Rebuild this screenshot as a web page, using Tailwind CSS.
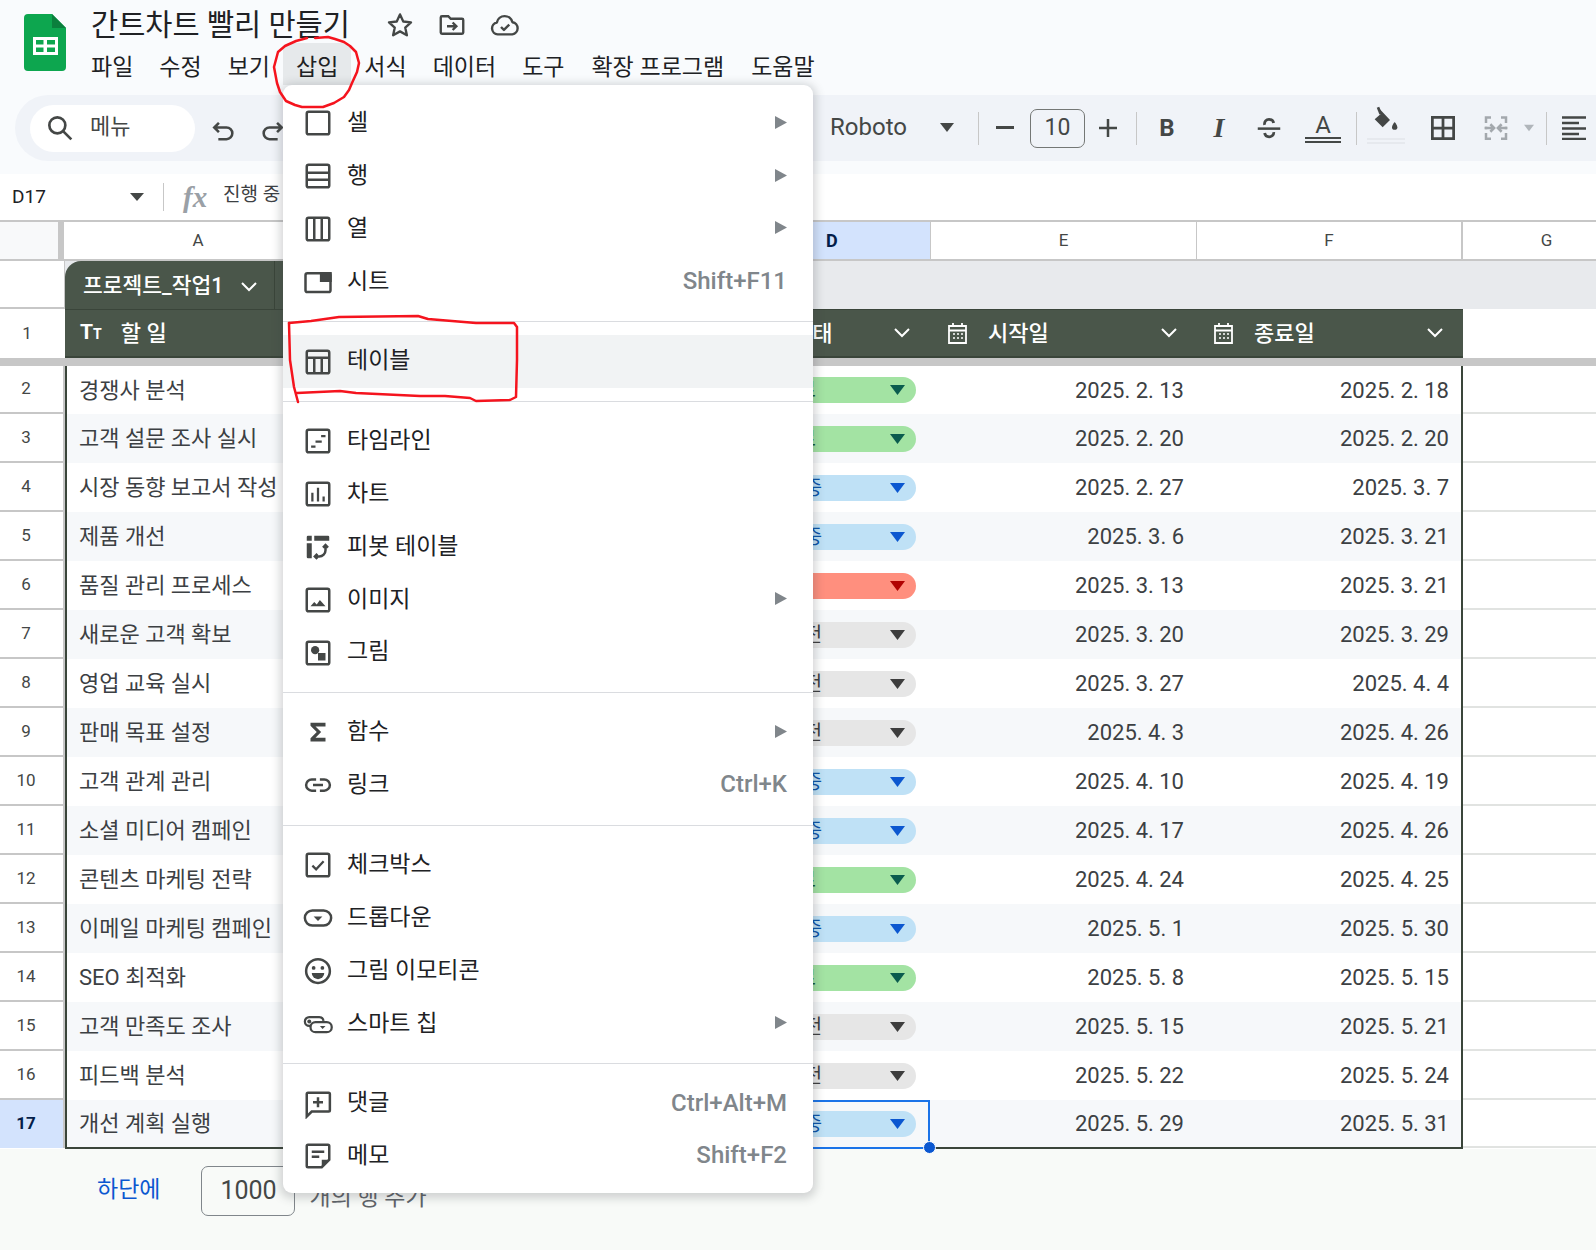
<!DOCTYPE html>
<html lang="ko">
<head>
<meta charset="utf-8">
<script src="https://cdn.jsdelivr.net/npm/@tailwindcss/browser@4"></script>
</head>
<body class="m-0">
<div class="relative w-[1596px] h-[1250px] overflow-hidden bg-[#f8faf8] text-[#3c4043] font-['Roboto','Noto_Sans_CJK_KR',sans-serif]">

  <!-- top -->
  <div class="bg-[#f9fbfd]">
    <div class="flex h-[95px] pl-[24px]">
      <svg class="mt-[14px] w-[42px] h-[57px] shrink-0" viewBox="0 0 42 57"><path d="M4 0H28L42 14V53a4 4 0 0 1-4 4H4a4 4 0 0 1-4-4V4a4 4 0 0 1 4-4z" fill="#0da64f"/><path d="M28 0L42 14H28z" fill="#0b7f3d"/><path d="M9 23H34V41H9zM12 26V30.500H19.500V26zM23 26V30.500H31V26zM12 33.500V38H19.500V33.500zM23 33.500V38H31V33.500z" fill="#fff" fill-rule="evenodd"/></svg>
      <div class="ml-[25px] flex flex-col">
        <div class="flex items-center h-[43px] pt-[7px]">
          <div class="w-[270px] text-[29.500px] text-[#202124] whitespace-nowrap">간트차트 빨리 만들기</div>
          <svg class="ml-[24px] w-[30px] h-[30px]" viewBox="0 0 24 24" fill="none" stroke="#444746" stroke-width="1.900" stroke-linejoin="round"><path d="M12 3.500l2.600 5.700 6.200.7-4.600 4.200 1.300 6.100L12 17.100l-5.500 3.100 1.300-6.100-4.600-4.200 6.200-.7z"/></svg>
          <svg class="ml-[22px] w-[30px] h-[30px]" viewBox="0 0 24 24" fill="none" stroke="#444746" stroke-width="1.900"><path d="M3 6a1 1 0 0 1 1-1h5l2 2h9a1 1 0 0 1 1 1v10a1 1 0 0 1-1 1H4a1 1 0 0 1-1-1z"/><path d="M8 13h7M12.500 10l3 3-3 3"/></svg>
          <svg class="ml-[22px] w-[32px] h-[32px]" viewBox="0 0 24 24" fill="none" stroke="#444746" stroke-width="1.800" stroke-linejoin="round"><path d="M6.500 19a4.500 4.500 0 0 1-.6-8.900 6 6 0 0 1 11.700-.2A4.600 4.600 0 0 1 17.500 19z"/><path d="M9 13.500l2.200 2.200 4-4"/></svg>
        </div>
        <div class="flex h-[42px] -ml-[13px] text-[23px] text-[#202124] pb-0">
          <div class="px-[13px] pt-[8px] flex items-center">파일</div>
          <div class="px-[13px] pt-[8px] flex items-center">수정</div>
          <div class="px-[13px] pt-[8px] flex items-center">보기</div>
          <div class="px-[13px] pt-[8px] flex items-center bg-[#e6e9eb] rounded-t-[6px]">삽입</div>
          <div class="px-[13px] pt-[8px] flex items-center">서식</div>
          <div class="px-[13px] pt-[8px] flex items-center">데이터</div>
          <div class="px-[13px] pt-[8px] flex items-center">도구</div>
          <div class="px-[14px] pt-[8px] flex items-center whitespace-nowrap">확장 프로그램</div>
          <div class="px-[13px] pt-[8px] flex items-center">도움말</div>
        </div>
      </div>
    </div>

    <!-- toolbar -->
    <div class="ml-[15px] h-[66px] rounded-l-[33px] bg-[#f0f3f8] flex items-center text-[#444746]">
      <div class="ml-[15px] w-[165px] h-[47px] rounded-full bg-white flex items-center pl-[14px] shrink-0">
        <svg class="w-[32px] h-[32px] shrink-0" viewBox="0 0 24 24" fill="none" stroke="#444746" stroke-width="2"><circle cx="10" cy="10" r="6"/><path d="M14.500 14.500L20.500 20.500"/></svg>
        <span class="ml-[14px] mb-[3px] text-[22px] text-[#444746]">메뉴</span>
      </div>
      <div class="ml-[3px] w-[50px] flex justify-center shrink-0"><svg class="w-[28px] h-[28px] mt-[6px]" viewBox="0 0 24 24" fill="none" stroke="#444746" stroke-width="2.200"><path d="M8.500 5L4.500 9l4 4M4.500 9H15a5 5 0 0 1 0 10H8"/></svg></div>
      <div class="w-[50px] flex justify-center shrink-0"><svg class="w-[28px] h-[28px] mt-[6px]" viewBox="0 0 24 24" fill="none" stroke="#444746" stroke-width="2.200"><path d="M15.500 5l4 4-4 4M19.500 9H9a5 5 0 0 0 0 10h7"/></svg></div>
      <div class="ml-[532px] w-[130px] flex items-center justify-between pr-[6px] pb-[2px] shrink-0 text-[24px]"><span>Roboto</span><svg class="w-[14px] h-[9px]" viewBox="0 0 14 9"><path d="M0 0H14L7 9z" fill="#444746"/></svg></div>
      <div class="ml-[18px] w-px h-[33px] bg-[#c7c7c7] shrink-0"></div>
      <div class="w-[51px] flex justify-center shrink-0"><svg class="w-[18px] h-[4px]" viewBox="0 0 18 4"><path d="M0 0H18V3H0z" fill="#444746"/></svg></div>
      <div class="w-[55px] h-[39px] border border-[#747775] rounded-[7px] flex items-center justify-center text-[23px] shrink-0">10</div>
      <div class="ml-[13px] w-[20px] flex justify-center shrink-0"><svg class="w-[18px] h-[18px]" viewBox="0 0 18 18"><path d="M7.750 0H10.250V7.750H18V10.250H10.250V18H7.750V10.250H0V7.750H7.750z" fill="#444746"/></svg></div>
      <div class="ml-[18px] w-px h-[33px] bg-[#c7c7c7] shrink-0"></div>
      <div class="ml-[10px] w-[40px] text-center text-[24px] font-bold shrink-0">B</div>
      <div class="ml-[12px] w-[40px] text-center text-[28px] leading-[30px] font-bold italic font-['Liberation_Serif',serif] shrink-0">I</div>
      <div class="ml-[10px] w-[40px] flex justify-center shrink-0"><svg class="w-[30px] h-[30px]" viewBox="0 0 24 24" fill="none" stroke="#444746" stroke-width="2"><path d="M3 12.500H21"/><path d="M8.500 9.500C8 6.800 9.800 5 12 5s3.500 1.300 3.700 3M8.500 16c.3 1.900 1.800 3 3.600 3 2.200 0 3.800-1.400 3.700-3.700" stroke-width="2.200"/></svg></div>
      <div class="ml-[14px] w-[40px] flex flex-col items-center shrink-0">
        <span class="text-[24px] leading-[25px] -mb-[1px]">A</span>
        <div class="w-[36px] h-[6px] border-y-2 border-[#444746]"></div>
      </div>
      <div class="ml-[13px] w-px h-[33px] bg-[#c7c7c7] shrink-0"></div>
      <div class="ml-[9px] w-[40px] flex flex-col items-center shrink-0">
        <svg class="w-[32px] h-[32px] -mt-[6px]" viewBox="0 0 24 24"><path d="M6 1L15 10.500 9.500 16 3.500 10 8 6z" fill="#444746"/><path d="M6 1L8 6" stroke="#444746" stroke-width="2"/><path d="M18.500 12s-2 2.400-2 3.900a2 2 0 0 0 4 0c0-1.500-2-3.900-2-3.900z" fill="#444746"/></svg>
        <div class="w-[38px] h-[6px] border-y-2 border-[#e6e9ee]"></div>
      </div>
      <div class="ml-[17px] w-[40px] flex justify-center shrink-0"><svg class="w-[30px] h-[30px]" viewBox="0 0 24 24" fill="none" stroke="#444746" stroke-width="2.200"><path d="M3.500 3.500H20.500V20.500H3.500zM12 3.500V20.500M3.500 12H20.500"/></svg></div>
      <div class="ml-[13px] w-[40px] flex justify-center shrink-0"><svg class="w-[30px] h-[30px]" viewBox="0 0 24 24" fill="none" stroke="#a3a8ad" stroke-width="2"><path d="M8 3.500H4V8M4 16V20.500H8M16 3.500H20V8M20 16V20.500H16M4 11V13M20 11V13"/><path d="M3 12H10M7.500 9l3 3-3 3M21 12H14M16.500 9l-3 3 3 3"/></svg></div>
      <div class="ml-[8px] w-[10px] flex justify-center shrink-0"><svg class="w-[12px] h-[8px]" viewBox="0 0 12 8"><path d="M0 0H12L6 8z" fill="#b0b5ba"/></svg></div>
      <div class="ml-[12px] w-px h-[33px] bg-[#c7c7c7] shrink-0"></div>
      <div class="ml-[7px] w-[40px] flex justify-center shrink-0"><svg class="w-[24px] h-[24px]" viewBox="0 0 24 24" fill="none" stroke="#444746" stroke-width="2.500"><path d="M0 1.500H24M0 7H17M0 12.500H24M0 18H17M0 23H24"/></svg></div>
    </div>

    <!-- formula bar -->
    <div class="mt-[13px] h-[46px] bg-white flex items-center">
      <div class="w-[130px] pl-[12px] text-[19px] text-[#202124] shrink-0">D17</div>
      <svg class="w-[14px] h-[8px] shrink-0" viewBox="0 0 14 8"><path d="M0 0H14L7 8z" fill="#444746"/></svg>
      <div class="ml-[19px] w-px h-[28px] bg-[#c7c7c7] shrink-0"></div>
      <div class="ml-[19px] w-[26px] text-[29px] leading-none italic font-bold font-['Liberation_Serif',serif] text-[#9aa0a6] shrink-0">fx</div>
      <div class="ml-[14px] mb-[3px] text-[19px] text-[#3c4043] whitespace-nowrap">진행 중</div>
    </div>
  </div>

  <!-- sheet -->
  <div class="bg-white">
    <div class="flex h-[39px] border-t-2 border-[#c7c7c7] text-[#444746] text-[17px]">
      <div class="w-[58px] bg-[#f8f9fa] shrink-0"></div>
      <div class="w-[6px] bg-[#c7c7c7] shrink-0"></div>
      <div class="w-[680px] flex justify-center pr-[410px] items-center border-r-2 border-[#e1e3e1] shrink-0">A</div>
      <div class="w-[186px] bg-[#d3e3fd] text-[#041e49] font-bold text-[18px] flex items-center pl-[82px] shrink-0">D</div>
      <div class="w-[267px] flex items-center justify-center border-x border-[#c7c7c7] shrink-0">E</div>
      <div class="w-[266px] flex items-center justify-center border-r-2 border-[#c7c7c7] shrink-0">F</div>
      <div class="flex-1 flex items-center justify-center pl-[34px]">G</div>
    </div>
    <div class="h-[2px] bg-[#c7c7c7]"></div>

    <!-- table name row -->
    <div class="flex h-[48px]">
      <div class="w-[65px] shrink-0 bg-white border-b-2 border-r border-[#c7c7c7]"></div>
      <div class="flex-1 bg-[#e8eaed] flex">
        <div class="w-[680px] h-full rounded-tl-[16px] bg-[#4a564a] flex items-center text-white">
          <div class="w-[210px] h-full border-r border-[#3a453a] flex items-center pl-[18px] pt-[3px] shrink-0">
            <span class="font-medium text-[21.500px] whitespace-nowrap">프로젝트_작업1</span>
            <svg class="ml-[17px] w-[16px] h-[10px] shrink-0" viewBox="0 0 16 10" fill="none" stroke="#fff" stroke-width="2"><path d="M1 1l7 7 7-7"/></svg>
          </div>
        </div>
      </div>
    </div>

    <!-- header row -->
    <div class="flex h-[49px]">
      <div class="w-[65px] shrink-0 flex items-center justify-center text-[17px] text-[#444746] pr-[11px]">1</div>
      <div class="w-[1398px] shrink-0 bg-[#4a564a] border-t border-b-2 border-[#3a453a] text-white text-[22px] flex items-center">
        <div class="w-[680px] shrink-0 flex items-center pl-[15px]">
          <span class="font-bold text-[21px]">T</span><span class="font-bold text-[14px] mt-[3px]">T</span>
          <span class="ml-[19px] font-medium">할 일</span>
        </div>
        <div class="w-[185px] shrink-0 flex items-center justify-between pr-[20px] pl-[47px]">
          <span class="font-medium">상태</span>
          <svg class="w-[16px] h-[10px]" viewBox="0 0 16 10" fill="none" stroke="#fff" stroke-width="2"><path d="M1 1l7 7 7-7"/></svg>
        </div>
        <div class="w-[266px] shrink-0 flex items-center pl-[17px] pr-[19px]">
          <svg class="w-[21px] h-[24px] shrink-0" viewBox="0 0 21 24" fill="none" stroke="#fff" stroke-width="1.800"><path d="M2 5H19V22H2zM2 9.500H19M6 2V6M15 2V6"/><path d="M6 13h2M10 13h2M14 13h2M6 17h2M10 17h2M14 17h2" stroke-width="1.500"/></svg>
          <span class="ml-[20px] font-medium flex-1">시작일</span>
          <svg class="w-[16px] h-[10px]" viewBox="0 0 16 10" fill="none" stroke="#fff" stroke-width="2"><path d="M1 1l7 7 7-7"/></svg>
        </div>
        <div class="w-[265px] shrink-0 flex items-center pl-[17px] pr-[18px]">
          <svg class="w-[21px] h-[24px] shrink-0" viewBox="0 0 21 24" fill="none" stroke="#fff" stroke-width="1.800"><path d="M2 5H19V22H2zM2 9.500H19M6 2V6M15 2V6"/><path d="M6 13h2M10 13h2M14 13h2M6 17h2M10 17h2M14 17h2" stroke-width="1.500"/></svg>
          <span class="ml-[20px] font-medium flex-1">종료일</span>
          <svg class="w-[16px] h-[10px]" viewBox="0 0 16 10" fill="none" stroke="#fff" stroke-width="2"><path d="M1 1l7 7 7-7"/></svg>
        </div>
      </div>
      <div class="flex-1"></div>
    </div>
    <div class="h-[8px] bg-[#c7c7c7]"></div>

    <!-- data rows -->
    <div class="flex h-[48px]">
      <div class="w-[65px] shrink-0 border-b-2 border-r-2 border-[#c7c7c7] flex items-center justify-center text-[17px] text-[#444746] pr-[11px]">2</div>
      <div class="w-[1398px] shrink-0 border-x-2 border-[#3a453a] flex items-center text-[22px] bg-white">
        <div class="w-[678px] shrink-0 pl-[12px] whitespace-nowrap">경쟁사 분석</div>
        <div class="w-[185px] shrink-0 pl-[5px]"><div class="w-[166px] h-[26px] rounded-full bg-[#a3e3a3] flex items-center pr-[11px] text-[20px] text-[#0a5132]"><span class="ml-[29px] flex-1">완료</span><svg class="w-[15px] h-[10px]" viewBox="0 0 15 10"><path d="M0 0H15L7.500 10z" fill="#0a5c4e"/></svg></div></div>
        <div class="w-[266px] shrink-0 text-right pr-[12px]">2025. 2. 13</div>
        <div class="w-[265px] shrink-0 text-right pr-[12px]">2025. 2. 18</div>
      </div>
      <div class="flex-1 border-b-2 border-[#e1e3e1]"></div>
    </div>
    <div class="flex h-[49px]">
      <div class="w-[65px] shrink-0 border-b-2 border-r-2 border-[#c7c7c7] flex items-center justify-center text-[17px] text-[#444746] pr-[11px]">3</div>
      <div class="w-[1398px] shrink-0 border-x-2 border-[#3a453a] flex items-center text-[22px] bg-[#f6f8fa] self-stretch">
        <div class="w-[678px] shrink-0 pl-[12px] whitespace-nowrap">고객 설문 조사 실시</div>
        <div class="w-[185px] shrink-0 pl-[5px]"><div class="w-[166px] h-[26px] rounded-full bg-[#a3e3a3] flex items-center pr-[11px] text-[20px] text-[#0a5132]"><span class="ml-[29px] flex-1">완료</span><svg class="w-[15px] h-[10px]" viewBox="0 0 15 10"><path d="M0 0H15L7.500 10z" fill="#0a5c4e"/></svg></div></div>
        <div class="w-[266px] shrink-0 text-right pr-[12px]">2025. 2. 20</div>
        <div class="w-[265px] shrink-0 text-right pr-[12px]">2025. 2. 20</div>
      </div>
      <div class="flex-1 border-b-2 border-[#e1e3e1]"></div>
    </div>
    <div class="flex h-[49px]">
      <div class="w-[65px] shrink-0 border-b-2 border-r-2 border-[#c7c7c7] flex items-center justify-center text-[17px] text-[#444746] pr-[11px]">4</div>
      <div class="w-[1398px] shrink-0 border-x-2 border-[#3a453a] flex items-center text-[22px] bg-white">
        <div class="w-[678px] shrink-0 pl-[12px] whitespace-nowrap">시장 동향 보고서 작성</div>
        <div class="w-[185px] shrink-0 pl-[5px]"><div class="w-[166px] h-[26px] rounded-full bg-[#bfe1f6] flex items-center pr-[11px] text-[20px] text-[#0a53a8]"><span class="ml-[12px] flex-1">진행 중</span><svg class="w-[15px] h-[10px]" viewBox="0 0 15 10"><path d="M0 0H15L7.500 10z" fill="#0b57d0"/></svg></div></div>
        <div class="w-[266px] shrink-0 text-right pr-[12px]">2025. 2. 27</div>
        <div class="w-[265px] shrink-0 text-right pr-[12px]">2025. 3. 7</div>
      </div>
      <div class="flex-1 border-b-2 border-[#e1e3e1]"></div>
    </div>
    <div class="flex h-[49px]">
      <div class="w-[65px] shrink-0 border-b-2 border-r-2 border-[#c7c7c7] flex items-center justify-center text-[17px] text-[#444746] pr-[11px]">5</div>
      <div class="w-[1398px] shrink-0 border-x-2 border-[#3a453a] flex items-center text-[22px] bg-[#f6f8fa]">
        <div class="w-[678px] shrink-0 pl-[12px] whitespace-nowrap">제품 개선</div>
        <div class="w-[185px] shrink-0 pl-[5px]"><div class="w-[166px] h-[26px] rounded-full bg-[#bfe1f6] flex items-center pr-[11px] text-[20px] text-[#0a53a8]"><span class="ml-[12px] flex-1">진행 중</span><svg class="w-[15px] h-[10px]" viewBox="0 0 15 10"><path d="M0 0H15L7.500 10z" fill="#0b57d0"/></svg></div></div>
        <div class="w-[266px] shrink-0 text-right pr-[12px]">2025. 3. 6</div>
        <div class="w-[265px] shrink-0 text-right pr-[12px]">2025. 3. 21</div>
      </div>
      <div class="flex-1 border-b-2 border-[#e1e3e1]"></div>
    </div>
    <div class="flex h-[49px]">
      <div class="w-[65px] shrink-0 border-b-2 border-r-2 border-[#c7c7c7] flex items-center justify-center text-[17px] text-[#444746] pr-[11px]">6</div>
      <div class="w-[1398px] shrink-0 border-x-2 border-[#3a453a] flex items-center text-[22px] bg-white">
        <div class="w-[678px] shrink-0 pl-[12px] whitespace-nowrap">품질 관리 프로세스</div>
        <div class="w-[185px] shrink-0 pl-[5px]"><div class="w-[166px] h-[26px] rounded-full bg-[#ff8f7e] flex items-center pr-[11px] text-[20px] text-[#8a1c0a]"><span class="ml-[4px] flex-1">차단됨</span><svg class="w-[15px] h-[10px]" viewBox="0 0 15 10"><path d="M0 0H15L7.500 10z" fill="#b10202"/></svg></div></div>
        <div class="w-[266px] shrink-0 text-right pr-[12px]">2025. 3. 13</div>
        <div class="w-[265px] shrink-0 text-right pr-[12px]">2025. 3. 21</div>
      </div>
      <div class="flex-1 border-b-2 border-[#e1e3e1]"></div>
    </div>
    <div class="flex h-[49px]">
      <div class="w-[65px] shrink-0 border-b-2 border-r-2 border-[#c7c7c7] flex items-center justify-center text-[17px] text-[#444746] pr-[11px]">7</div>
      <div class="w-[1398px] shrink-0 border-x-2 border-[#3a453a] flex items-center text-[22px] bg-[#f6f8fa]">
        <div class="w-[678px] shrink-0 pl-[12px] whitespace-nowrap">새로운 고객 확보</div>
        <div class="w-[185px] shrink-0 pl-[5px]"><div class="w-[166px] h-[26px] rounded-full bg-[#e6e6e6] flex items-center pr-[11px] text-[20px] text-[#3d3d3d]"><span class="ml-[12px] flex-1">시작 전</span><svg class="w-[15px] h-[10px]" viewBox="0 0 15 10"><path d="M0 0H15L7.500 10z" fill="#3d3d3d"/></svg></div></div>
        <div class="w-[266px] shrink-0 text-right pr-[12px]">2025. 3. 20</div>
        <div class="w-[265px] shrink-0 text-right pr-[12px]">2025. 3. 29</div>
      </div>
      <div class="flex-1 border-b-2 border-[#e1e3e1]"></div>
    </div>
    <div class="flex h-[49px]">
      <div class="w-[65px] shrink-0 border-b-2 border-r-2 border-[#c7c7c7] flex items-center justify-center text-[17px] text-[#444746] pr-[11px]">8</div>
      <div class="w-[1398px] shrink-0 border-x-2 border-[#3a453a] flex items-center text-[22px] bg-white">
        <div class="w-[678px] shrink-0 pl-[12px] whitespace-nowrap">영업 교육 실시</div>
        <div class="w-[185px] shrink-0 pl-[5px]"><div class="w-[166px] h-[26px] rounded-full bg-[#e6e6e6] flex items-center pr-[11px] text-[20px] text-[#3d3d3d]"><span class="ml-[12px] flex-1">시작 전</span><svg class="w-[15px] h-[10px]" viewBox="0 0 15 10"><path d="M0 0H15L7.500 10z" fill="#3d3d3d"/></svg></div></div>
        <div class="w-[266px] shrink-0 text-right pr-[12px]">2025. 3. 27</div>
        <div class="w-[265px] shrink-0 text-right pr-[12px]">2025. 4. 4</div>
      </div>
      <div class="flex-1 border-b-2 border-[#e1e3e1]"></div>
    </div>
    <div class="flex h-[49px]">
      <div class="w-[65px] shrink-0 border-b-2 border-r-2 border-[#c7c7c7] flex items-center justify-center text-[17px] text-[#444746] pr-[11px]">9</div>
      <div class="w-[1398px] shrink-0 border-x-2 border-[#3a453a] flex items-center text-[22px] bg-[#f6f8fa]">
        <div class="w-[678px] shrink-0 pl-[12px] whitespace-nowrap">판매 목표 설정</div>
        <div class="w-[185px] shrink-0 pl-[5px]"><div class="w-[166px] h-[26px] rounded-full bg-[#e6e6e6] flex items-center pr-[11px] text-[20px] text-[#3d3d3d]"><span class="ml-[12px] flex-1">시작 전</span><svg class="w-[15px] h-[10px]" viewBox="0 0 15 10"><path d="M0 0H15L7.500 10z" fill="#3d3d3d"/></svg></div></div>
        <div class="w-[266px] shrink-0 text-right pr-[12px]">2025. 4. 3</div>
        <div class="w-[265px] shrink-0 text-right pr-[12px]">2025. 4. 26</div>
      </div>
      <div class="flex-1 border-b-2 border-[#e1e3e1]"></div>
    </div>
    <div class="flex h-[49px]">
      <div class="w-[65px] shrink-0 border-b-2 border-r-2 border-[#c7c7c7] flex items-center justify-center text-[17px] text-[#444746] pr-[11px]">10</div>
      <div class="w-[1398px] shrink-0 border-x-2 border-[#3a453a] flex items-center text-[22px] bg-white">
        <div class="w-[678px] shrink-0 pl-[12px] whitespace-nowrap">고객 관계 관리</div>
        <div class="w-[185px] shrink-0 pl-[5px]"><div class="w-[166px] h-[26px] rounded-full bg-[#bfe1f6] flex items-center pr-[11px] text-[20px] text-[#0a53a8]"><span class="ml-[12px] flex-1">진행 중</span><svg class="w-[15px] h-[10px]" viewBox="0 0 15 10"><path d="M0 0H15L7.500 10z" fill="#0b57d0"/></svg></div></div>
        <div class="w-[266px] shrink-0 text-right pr-[12px]">2025. 4. 10</div>
        <div class="w-[265px] shrink-0 text-right pr-[12px]">2025. 4. 19</div>
      </div>
      <div class="flex-1 border-b-2 border-[#e1e3e1]"></div>
    </div>
    <div class="flex h-[49px]">
      <div class="w-[65px] shrink-0 border-b-2 border-r-2 border-[#c7c7c7] flex items-center justify-center text-[17px] text-[#444746] pr-[11px]">11</div>
      <div class="w-[1398px] shrink-0 border-x-2 border-[#3a453a] flex items-center text-[22px] bg-[#f6f8fa]">
        <div class="w-[678px] shrink-0 pl-[12px] whitespace-nowrap">소셜 미디어 캠페인</div>
        <div class="w-[185px] shrink-0 pl-[5px]"><div class="w-[166px] h-[26px] rounded-full bg-[#bfe1f6] flex items-center pr-[11px] text-[20px] text-[#0a53a8]"><span class="ml-[12px] flex-1">진행 중</span><svg class="w-[15px] h-[10px]" viewBox="0 0 15 10"><path d="M0 0H15L7.500 10z" fill="#0b57d0"/></svg></div></div>
        <div class="w-[266px] shrink-0 text-right pr-[12px]">2025. 4. 17</div>
        <div class="w-[265px] shrink-0 text-right pr-[12px]">2025. 4. 26</div>
      </div>
      <div class="flex-1 border-b-2 border-[#e1e3e1]"></div>
    </div>
    <div class="flex h-[49px]">
      <div class="w-[65px] shrink-0 border-b-2 border-r-2 border-[#c7c7c7] flex items-center justify-center text-[17px] text-[#444746] pr-[11px]">12</div>
      <div class="w-[1398px] shrink-0 border-x-2 border-[#3a453a] flex items-center text-[22px] bg-white">
        <div class="w-[678px] shrink-0 pl-[12px] whitespace-nowrap">콘텐츠 마케팅 전략</div>
        <div class="w-[185px] shrink-0 pl-[5px]"><div class="w-[166px] h-[26px] rounded-full bg-[#a3e3a3] flex items-center pr-[11px] text-[20px] text-[#0a5132]"><span class="ml-[29px] flex-1">완료</span><svg class="w-[15px] h-[10px]" viewBox="0 0 15 10"><path d="M0 0H15L7.500 10z" fill="#0a5c4e"/></svg></div></div>
        <div class="w-[266px] shrink-0 text-right pr-[12px]">2025. 4. 24</div>
        <div class="w-[265px] shrink-0 text-right pr-[12px]">2025. 4. 25</div>
      </div>
      <div class="flex-1 border-b-2 border-[#e1e3e1]"></div>
    </div>
    <div class="flex h-[49px]">
      <div class="w-[65px] shrink-0 border-b-2 border-r-2 border-[#c7c7c7] flex items-center justify-center text-[17px] text-[#444746] pr-[11px]">13</div>
      <div class="w-[1398px] shrink-0 border-x-2 border-[#3a453a] flex items-center text-[22px] bg-[#f6f8fa]">
        <div class="w-[678px] shrink-0 pl-[12px] whitespace-nowrap">이메일 마케팅 캠페인</div>
        <div class="w-[185px] shrink-0 pl-[5px]"><div class="w-[166px] h-[26px] rounded-full bg-[#bfe1f6] flex items-center pr-[11px] text-[20px] text-[#0a53a8]"><span class="ml-[12px] flex-1">진행 중</span><svg class="w-[15px] h-[10px]" viewBox="0 0 15 10"><path d="M0 0H15L7.500 10z" fill="#0b57d0"/></svg></div></div>
        <div class="w-[266px] shrink-0 text-right pr-[12px]">2025. 5. 1</div>
        <div class="w-[265px] shrink-0 text-right pr-[12px]">2025. 5. 30</div>
      </div>
      <div class="flex-1 border-b-2 border-[#e1e3e1]"></div>
    </div>
    <div class="flex h-[49px]">
      <div class="w-[65px] shrink-0 border-b-2 border-r-2 border-[#c7c7c7] flex items-center justify-center text-[17px] text-[#444746] pr-[11px]">14</div>
      <div class="w-[1398px] shrink-0 border-x-2 border-[#3a453a] flex items-center text-[22px] bg-white">
        <div class="w-[678px] shrink-0 pl-[12px] whitespace-nowrap">SEO 최적화</div>
        <div class="w-[185px] shrink-0 pl-[5px]"><div class="w-[166px] h-[26px] rounded-full bg-[#a3e3a3] flex items-center pr-[11px] text-[20px] text-[#0a5132]"><span class="ml-[29px] flex-1">완료</span><svg class="w-[15px] h-[10px]" viewBox="0 0 15 10"><path d="M0 0H15L7.500 10z" fill="#0a5c4e"/></svg></div></div>
        <div class="w-[266px] shrink-0 text-right pr-[12px]">2025. 5. 8</div>
        <div class="w-[265px] shrink-0 text-right pr-[12px]">2025. 5. 15</div>
      </div>
      <div class="flex-1 border-b-2 border-[#e1e3e1]"></div>
    </div>
    <div class="flex h-[49px]">
      <div class="w-[65px] shrink-0 border-b-2 border-r-2 border-[#c7c7c7] flex items-center justify-center text-[17px] text-[#444746] pr-[11px]">15</div>
      <div class="w-[1398px] shrink-0 border-x-2 border-[#3a453a] flex items-center text-[22px] bg-[#f6f8fa]">
        <div class="w-[678px] shrink-0 pl-[12px] whitespace-nowrap">고객 만족도 조사</div>
        <div class="w-[185px] shrink-0 pl-[5px]"><div class="w-[166px] h-[26px] rounded-full bg-[#e6e6e6] flex items-center pr-[11px] text-[20px] text-[#3d3d3d]"><span class="ml-[12px] flex-1">시작 전</span><svg class="w-[15px] h-[10px]" viewBox="0 0 15 10"><path d="M0 0H15L7.500 10z" fill="#3d3d3d"/></svg></div></div>
        <div class="w-[266px] shrink-0 text-right pr-[12px]">2025. 5. 15</div>
        <div class="w-[265px] shrink-0 text-right pr-[12px]">2025. 5. 21</div>
      </div>
      <div class="flex-1 border-b-2 border-[#e1e3e1]"></div>
    </div>
    <div class="flex h-[49px]">
      <div class="w-[65px] shrink-0 border-b-2 border-r-2 border-[#c7c7c7] flex items-center justify-center text-[17px] text-[#444746] pr-[11px]">16</div>
      <div class="w-[1398px] shrink-0 border-x-2 border-[#3a453a] flex items-center text-[22px] bg-white">
        <div class="w-[678px] shrink-0 pl-[12px] whitespace-nowrap">피드백 분석</div>
        <div class="w-[185px] shrink-0 pl-[5px]"><div class="w-[166px] h-[26px] rounded-full bg-[#e6e6e6] flex items-center pr-[11px] text-[20px] text-[#3d3d3d]"><span class="ml-[12px] flex-1">시작 전</span><svg class="w-[15px] h-[10px]" viewBox="0 0 15 10"><path d="M0 0H15L7.500 10z" fill="#3d3d3d"/></svg></div></div>
        <div class="w-[266px] shrink-0 text-right pr-[12px]">2025. 5. 22</div>
        <div class="w-[265px] shrink-0 text-right pr-[12px]">2025. 5. 24</div>
      </div>
      <div class="flex-1 border-b-2 border-[#e1e3e1]"></div>
    </div>
    <div class="flex h-[49px]">
      <div class="w-[65px] h-[48px] shrink-0 border-r-2 border-[#c7c7c7] bg-[#d3e3fd] flex items-center justify-center text-[17px] font-bold text-[#041e49] pr-[11px]">17</div>
      <div class="w-[1398px] shrink-0 border-x-2 border-b-2 border-[#3a453a] flex items-center text-[22px] bg-[#f6f8fa]">
        <div class="w-[678px] shrink-0 pl-[12px] whitespace-nowrap">개선 계획 실행</div>
        <div class="relative w-[185px] self-stretch shrink-0 pl-[5px] flex items-center">
          <div class="absolute left-0 right-0 top-0 -bottom-[2px] border-2 border-[#1a73e8] border-l-0"></div>
          <div class="w-[166px] h-[26px] rounded-full bg-[#bfe1f6] flex items-center pr-[11px] text-[20px] text-[#0a53a8]"><span class="ml-[12px] flex-1">진행 중</span><svg class="w-[15px] h-[10px]" viewBox="0 0 15 10"><path d="M0 0H15L7.500 10z" fill="#0b57d0"/></svg></div>
          <div class="absolute -right-[6px] -bottom-[7px] w-[13px] h-[13px] rounded-full bg-[#0b57d0] border-[1.500px] border-white"></div>
        </div>
        <div class="w-[266px] shrink-0 text-right pr-[12px]">2025. 5. 29</div>
        <div class="w-[265px] shrink-0 text-right pr-[12px]">2025. 5. 31</div>
      </div>
      <div class="flex-1 h-[48px] border-b-2 border-[#e1e3e1]"></div>
    </div>
  </div>

  <!-- add rows -->
  <div class="flex items-center pl-[97px] pt-[17px]">
    <span class="text-[23px] text-[#0b57d0] -mt-[2px]">하단에</span>
    <div class="ml-[41px] w-[94px] h-[50px] rounded-[7px] border border-[#80868b] flex items-center justify-center text-[25px] text-[#444746] shrink-0">1000</div>
    <span class="ml-[14px] text-[23px] text-[#5f6368] mt-[14px] whitespace-nowrap">개의 행 추가</span>
  </div>

  <!-- insert menu -->
  <div class="absolute left-[283px] top-[85px] w-[530px] h-[1108px] bg-white rounded-[9px] shadow-[0_2px_10px_3px_rgba(60,64,67,0.22)] pt-[12px] text-[23px] text-[#202124]">
    <div class="flex items-center h-[52.800px] pl-[20px] pr-[26px]">
      <svg class="w-[30px] h-[30px] shrink-0" viewBox="0 0 24 24" fill="none" stroke="#444746" stroke-width="2"><rect x="3" y="3" width="18" height="18" rx="1.500"/></svg>
      <span class="ml-[14px] flex-1">셀</span>
      <svg class="w-[12px] h-[13px] -mt-[2px]" viewBox="0 0 12 13"><path d="M0 0L12 6.500 0 13z" fill="#80868b"/></svg>
    </div>
    <div class="flex items-center h-[52.800px] pl-[20px] pr-[26px]">
      <svg class="w-[30px] h-[30px] shrink-0" viewBox="0 0 24 24" fill="none" stroke="#444746" stroke-width="2"><rect x="3" y="3" width="18" height="18" rx="1.500"/><path d="M3 9.300H21M3 15H21"/></svg>
      <span class="ml-[14px] flex-1">행</span>
      <svg class="w-[12px] h-[13px] -mt-[2px]" viewBox="0 0 12 13"><path d="M0 0L12 6.500 0 13z" fill="#80868b"/></svg>
    </div>
    <div class="flex items-center h-[52.800px] pl-[20px] pr-[26px]">
      <svg class="w-[30px] h-[30px] shrink-0" viewBox="0 0 24 24" fill="none" stroke="#444746" stroke-width="2"><rect x="3" y="3" width="18" height="18" rx="1.500"/><path d="M9 3V21M15 3V21"/></svg>
      <span class="ml-[14px] flex-1">열</span>
      <svg class="w-[12px] h-[13px] -mt-[2px]" viewBox="0 0 12 13"><path d="M0 0L12 6.500 0 13z" fill="#80868b"/></svg>
    </div>
    <div class="flex items-center h-[52.800px] pl-[20px] pr-[26px]">
      <svg class="w-[30px] h-[30px] shrink-0" viewBox="0 0 24 24" fill="none" stroke="#444746" stroke-width="2"><rect x="2" y="5" width="20" height="15" rx="1.500"/><path d="M14.500 5H22V11H14.500z" fill="#444746"/></svg>
      <span class="ml-[14px] flex-1">시트</span>
      <span class="text-[24px] font-medium text-[#80868b] -mt-[2px]">Shift+F11</span>
    </div>
    <div class="mt-[13px] mb-[13px] h-px bg-[#dadce0]"></div>
    <div class="flex items-center h-[52.800px] pl-[20px] pr-[26px] bg-[#f1f3f4]">
      <svg class="w-[30px] h-[30px] shrink-0" viewBox="0 0 24 24" fill="none" stroke="#444746" stroke-width="2"><rect x="3" y="3" width="18" height="18" rx="1.500"/><path d="M3 8.500H21M9 8.500V21M15 8.500V21"/></svg>
      <span class="ml-[14px] flex-1">테이블</span>
    </div>
    <div class="mt-[13px] mb-[13px] h-px bg-[#dadce0]"></div>
    <div class="flex items-center h-[52.800px] pl-[20px] pr-[26px]">
      <svg class="w-[30px] h-[30px] shrink-0" viewBox="0 0 24 24" fill="none" stroke="#444746" stroke-width="2"><rect x="3" y="3" width="18" height="18" rx="1.500"/><path d="M6.500 16.500H10M10 12.500H15M14.500 8H18" stroke-width="1.800"/></svg>
      <span class="ml-[14px] flex-1">타임라인</span>
    </div>
    <div class="flex items-center h-[52.800px] pl-[20px] pr-[26px]">
      <svg class="w-[30px] h-[30px] shrink-0" viewBox="0 0 24 24" fill="none" stroke="#444746" stroke-width="2"><rect x="3" y="3" width="18" height="18" rx="1.500"/><path d="M7.500 11V18M12 7V18M16.500 14V18" stroke-width="1.800"/></svg>
      <span class="ml-[14px] flex-1">차트</span>
    </div>
    <div class="flex items-center h-[52.800px] pl-[20px] pr-[26px]">
      <svg class="w-[30px] h-[30px] shrink-0" viewBox="0 0 24 24"><path d="M3 4a1 1 0 0 1 1-1h3v4H3zM9 3h11a1 1 0 0 1 1 1v3H9zM3 9h4v12H4a1 1 0 0 1-1-1z" fill="#444746"/><path d="M10 19.500h3a5 5 0 0 0 5-5V11M11.500 17.500l-2 2 2 2M16 12.500l2-2 2 2" fill="none" stroke="#444746" stroke-width="2"/></svg>
      <span class="ml-[14px] flex-1">피봇 테이블</span>
    </div>
    <div class="flex items-center h-[52.800px] pl-[20px] pr-[26px]">
      <svg class="w-[30px] h-[30px] shrink-0" viewBox="0 0 24 24" fill="none" stroke="#444746" stroke-width="2"><rect x="3" y="3" width="18" height="18" rx="1.500"/><path d="M6 17l3-3.500 2 2 2.500-3.500L18 17z" fill="#444746" stroke="none"/></svg>
      <span class="ml-[14px] flex-1">이미지</span>
      <svg class="w-[12px] h-[13px] -mt-[2px]" viewBox="0 0 12 13"><path d="M0 0L12 6.500 0 13z" fill="#80868b"/></svg>
    </div>
    <div class="flex items-center h-[52.800px] pl-[20px] pr-[26px]">
      <svg class="w-[30px] h-[30px] shrink-0" viewBox="0 0 24 24" fill="none" stroke="#444746" stroke-width="2"><rect x="3" y="3" width="18" height="18" rx="1.500"/><circle cx="9.700" cy="9.700" r="3.300" fill="#444746" stroke="none"/><path d="M12 12H18V18H12z" fill="#444746" stroke="none"/></svg>
      <span class="ml-[14px] flex-1">그림</span>
    </div>
    <div class="mt-[13.500px] mb-[12.500px] h-px bg-[#dadce0]"></div>
    <div class="flex items-center h-[52.800px] pl-[20px] pr-[26px]">
      <svg class="w-[30px] h-[30px] shrink-0" viewBox="0 0 24 24"><path d="M6 4.500H18V7.500H10L14.500 12 10 16.500H18V19.500H6V17L11 12 6 7z" fill="#444746"/></svg>
      <span class="ml-[14px] flex-1">함수</span>
      <svg class="w-[12px] h-[13px] -mt-[2px]" viewBox="0 0 12 13"><path d="M0 0L12 6.500 0 13z" fill="#80868b"/></svg>
    </div>
    <div class="flex items-center h-[52.800px] pl-[20px] pr-[26px]">
      <svg class="w-[30px] h-[30px] shrink-0" viewBox="0 0 24 24" fill="none" stroke="#444746" stroke-width="2"><path d="M10.500 7.500H7a4.500 4.500 0 0 0 0 9h3.500M13.500 7.500H17a4.500 4.500 0 0 1 0 9h-3.500M8 12H16"/></svg>
      <span class="ml-[14px] flex-1">링크</span>
      <span class="text-[24px] font-medium text-[#80868b] -mt-[2px]">Ctrl+K</span>
    </div>
    <div class="mt-[13px] mb-[13.500px] h-px bg-[#dadce0]"></div>
    <div class="flex items-center h-[52.800px] pl-[20px] pr-[26px]">
      <svg class="w-[30px] h-[30px] shrink-0" viewBox="0 0 24 24" fill="none" stroke="#444746" stroke-width="2"><rect x="3" y="3" width="18" height="18" rx="1.500"/><path d="M7.500 12.500l3 3 6-6.500" stroke-width="1.800"/></svg>
      <span class="ml-[14px] flex-1">체크박스</span>
    </div>
    <div class="flex items-center h-[52.800px] pl-[20px] pr-[26px]">
      <svg class="w-[30px] h-[30px] shrink-0" viewBox="0 0 24 24" fill="none" stroke="#444746" stroke-width="2"><rect x="1.500" y="6" width="21" height="12" rx="6"/><path d="M8.500 10.800H15.500L12 14.300z" fill="#444746" stroke="none"/></svg>
      <span class="ml-[14px] flex-1">드롭다운</span>
    </div>
    <div class="flex items-center h-[52.800px] pl-[20px] pr-[26px]">
      <svg class="w-[30px] h-[30px] shrink-0" viewBox="0 0 24 24" fill="none" stroke="#444746" stroke-width="2"><circle cx="12" cy="12" r="9.500"/><circle cx="8.500" cy="9.500" r="1.500" fill="#444746" stroke="none"/><circle cx="15.500" cy="9.500" r="1.500" fill="#444746" stroke="none"/><path d="M7 13.500H17a5 5 0 0 1-10 0z" fill="#444746" stroke="none"/></svg>
      <span class="ml-[14px] flex-1">그림 이모티콘</span>
    </div>
    <div class="flex items-center h-[52.800px] pl-[20px] pr-[26px]">
      <svg class="w-[30px] h-[30px] shrink-0" viewBox="0 0 24 24" fill="none" stroke="#444746" stroke-width="1.800"><path d="M6 13.500H5a3.500 3.500 0 0 1 0-7h8a3.500 3.500 0 0 1 3.400 3"/><circle cx="5" cy="10" r="1.600" fill="#444746" stroke="none"/><rect x="6" y="10.500" width="17" height="8" rx="4"/><path d="M13.500 13.500H18L15.700 16z" fill="#444746" stroke="none"/></svg>
      <span class="ml-[14px] flex-1">스마트 칩</span>
      <svg class="w-[12px] h-[13px] -mt-[2px]" viewBox="0 0 12 13"><path d="M0 0L12 6.500 0 13z" fill="#80868b"/></svg>
    </div>
    <div class="mt-[13px] mb-[13px] h-px bg-[#dadce0]"></div>
    <div class="flex items-center h-[52.800px] pl-[20px] pr-[26px]">
      <svg class="w-[30px] h-[30px] shrink-0" viewBox="0 0 24 24" fill="none" stroke="#444746" stroke-width="2"><path d="M3 22V4a1 1 0 0 1 1-1h16.500a1 1 0 0 1 1 1v13a1 1 0 0 1-1 1H7z"/><path d="M12 6.500V14.500M8 10.500H16"/></svg>
      <span class="ml-[14px] flex-1">댓글</span>
      <span class="text-[24px] font-medium text-[#80868b] -mt-[2px]">Ctrl+Alt+M</span>
    </div>
    <div class="flex items-center h-[52.800px] pl-[20px] pr-[26px]">
      <svg class="w-[30px] h-[30px] shrink-0" viewBox="0 0 24 24" fill="none" stroke="#444746" stroke-width="2"><path d="M4 3H20a1 1 0 0 1 1 1V15L15 21H4a1 1 0 0 1-1-1V4a1 1 0 0 1 1-1z"/><path d="M7 8.500H17M7 12.500H13"/><path d="M15 21V15H21z" fill="#444746" stroke="none"/></svg>
      <span class="ml-[14px] flex-1">메모</span>
      <span class="text-[24px] font-medium text-[#80868b] -mt-[2px]">Shift+F2</span>
    </div>
  </div>

  <!-- hand-drawn red annotations -->
  <svg class="absolute left-0 top-0 w-[1596px] h-[1250px] pointer-events-none" viewBox="0 0 1596 1250" fill="none" stroke="#f5141e" stroke-width="2.500" stroke-linejoin="round" stroke-linecap="round">
    <path d="M307 38L296 41 285 46 278 52 274 67 277 83 280 92 286 101 295 105 302 107 323 107 334 103 344 97 349 90 352 83 357 72 359 63 356 52 350 46 344 42 335 39 328 37 315 38"/>
    <path d="M289 323L311 321 325 319 339 317 418 316 428 319 452 321 476 323 514 323 517 327 517 360 516 397 510 400 476 401 470 398 445 396 420 396 356 393 340 391 297 393"/>
    <path d="M289 323L290 360 294 387 298 402"/>
  </svg>
</div>
</body>
</html>
